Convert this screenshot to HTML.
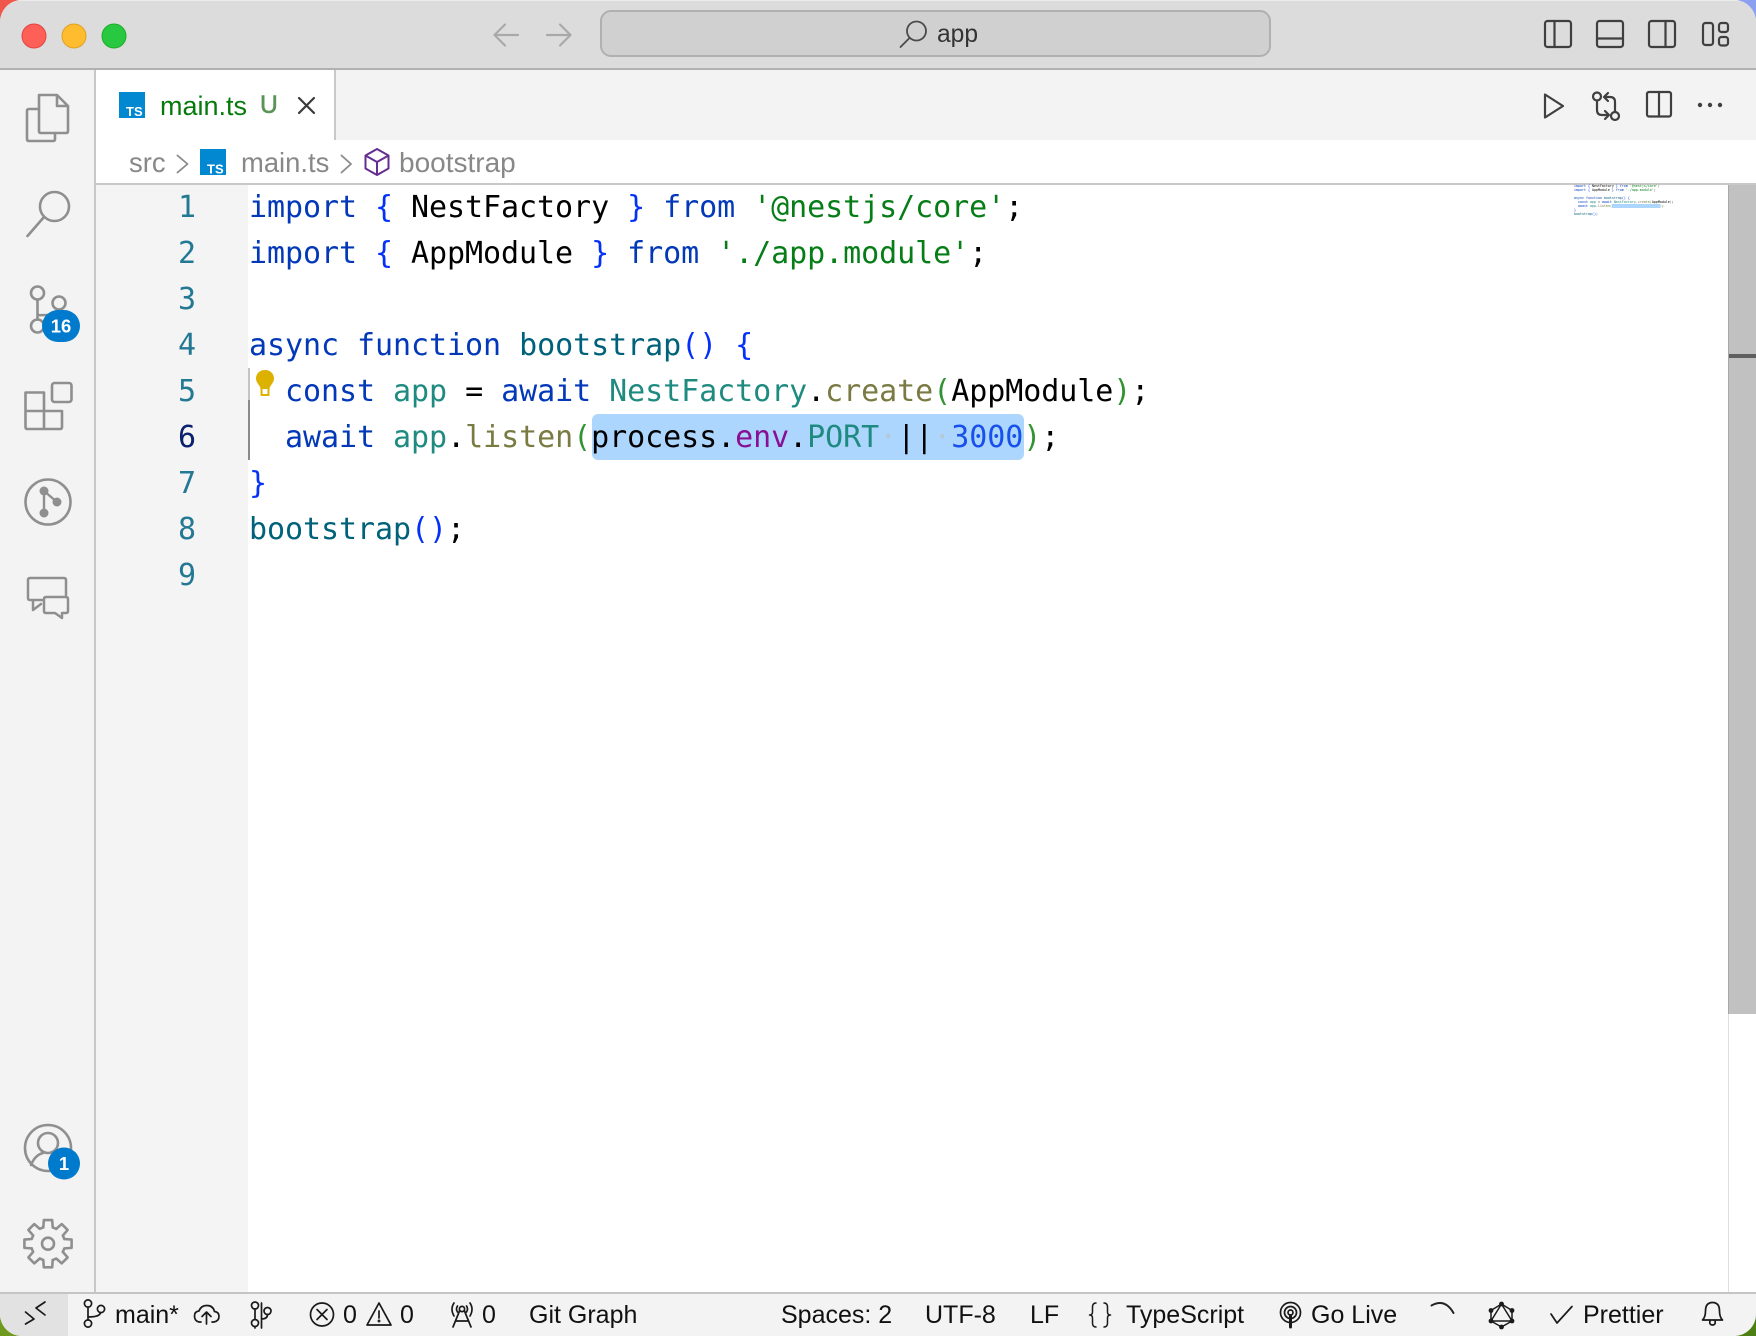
<!DOCTYPE html>
<html><head><meta charset="utf-8">
<style>
html,body{margin:0;padding:0;width:1756px;height:1336px;overflow:hidden;background:#fff}
#wp{position:absolute;left:0;top:0;width:1756px;height:1336px;background:linear-gradient(#fff,#fff)}
.c{position:absolute;width:30px;height:30px}
#w{position:absolute;left:0;top:0;width:1756px;height:1336px;border-radius:22px;overflow:hidden;background:#fff}
.b{position:absolute}
.t{position:absolute;white-space:pre;font-family:"Liberation Sans",sans-serif;line-height:30px;height:30px}
.st{font-size:25px;color:#111;top:1300px}
.bc{font-size:27.4px;color:#888;top:148px}
#code{position:absolute;left:249px;top:185px;font-family:"DejaVu Sans Mono","Liberation Mono",monospace;font-size:30px;line-height:46px;color:#000;white-space:pre;letter-spacing:-.06px}
#nums{position:absolute;left:150px;width:46px;top:185px;text-align:right;font-family:"DejaVu Sans Mono","Liberation Mono",monospace;font-size:30px;line-height:46px;color:#237893}
#mini{position:absolute;left:1574px;top:184px;font-family:"DejaVu Sans Mono",monospace;font-size:3.32px;line-height:4.03px;white-space:pre;color:#000}
.k{color:#0339b8}.br{color:#0431fa}.s{color:#067d17}.f{color:#00627a}.v{color:#1f8b80}.m{color:#7a7a43}.p{color:#319331}.e{color:#871094}.n{color:#1750eb}.d{color:#b4c8da}
svg{position:absolute;left:0;top:0}
</style></head><body>
<div id="wp">
<div class="c" style="left:0;top:0;background:#f0564a"></div>
<div class="c" style="right:0;top:0;background:#8c9ff0"></div>
<div class="c" style="left:0;bottom:0;background:#6f9a1e"></div>
<div class="c" style="right:0;bottom:0;background:#4e7f14"></div>
</div>
<div id="w">
<!-- title bar -->
<div class="b" style="left:0;top:0;width:1756px;height:68px;background:#dcdcdc;border-top:1px solid #ececec;box-sizing:border-box"></div>
<div class="b" style="left:0;top:68px;width:1756px;height:2px;background:#b1b1b1"></div>
<div class="b" style="left:600px;top:10px;width:671px;height:47px;box-sizing:border-box;background:#d0d0d0;border:2px solid #b0b0b0;border-radius:11px"></div>
<div class="t" style="left:937px;top:20px;font-size:24.6px;color:#333">app</div>
<!-- activity bar -->
<div class="b" style="left:0;top:70px;width:94px;height:1222px;background:#f3f3f3"></div>
<div class="b" style="left:94px;top:70px;width:2px;height:1222px;background:#c8c8c8"></div>
<!-- tabs -->
<div class="b" style="left:96px;top:70px;width:1660px;height:70px;background:#f3f3f3"></div>
<div class="b" style="left:96px;top:70px;width:238px;height:70px;background:#fff"></div>
<div class="b" style="left:334px;top:70px;width:2px;height:70px;background:#c8c8c8"></div>
<div class="t" style="left:160px;top:91px;font-size:27px;color:#067a0a">main.ts</div>
<div class="t" style="left:260px;top:91px;font-size:24.6px;color:#5b9457;-webkit-text-stroke:.6px #5b9457">U</div>
<!-- breadcrumbs -->
<div class="t bc" style="left:129px">src</div>
<div class="t bc" style="left:241px">main.ts</div>
<div class="t bc" style="left:399px;font-size:28px">bootstrap</div>
<div class="b" style="left:96px;top:183px;width:1660px;height:2px;background:#c8c8c8"></div>
<!-- gutter -->
<div class="b" style="left:96px;top:185px;width:152px;height:1107px;background:#f4f4f4"></div>
<div id="nums">1<br>2<br>3<br>4<br>5<br><span style="color:#0b216f">6</span><br>7<br>8<br>9</div>
<!-- selection -->
<div class="b" style="left:592px;top:414px;width:432px;height:46px;background:#add6ff;border-radius:6px"></div>
<div class="b" style="left:248px;top:368px;width:2px;height:32px;background:#c4c4c4"></div>
<div class="b" style="left:248px;top:400px;width:2px;height:60px;background:#8a8a8a"></div>
<div id="code"><span class="k">import</span> <span class="br">{</span> NestFactory <span class="br">}</span> <span class="k">from</span> <span class="s">'@nestjs/core'</span>;
<span class="k">import</span> <span class="br">{</span> AppModule <span class="br">}</span> <span class="k">from</span> <span class="s">'./app.module'</span>;

<span class="k">async</span> <span class="k">function</span> <span class="f">bootstrap</span><span class="br">()</span> <span class="br">{</span>
  <span class="k">const</span> <span class="v">app</span> = <span class="k">await</span> <span class="v">NestFactory</span>.<span class="m">create</span><span class="p">(</span>AppModule<span class="p">)</span>;
  <span class="k">await</span> <span class="v">app</span>.<span class="m">listen</span><span class="p">(</span>process.<span class="e">env</span>.<span class="v">PORT</span><span class="d">·</span>||<span class="d">·</span><span class="n">3000</span><span class="p">)</span>;
<span class="br">}</span>
<span class="f">bootstrap</span><span class="br">()</span>;</div>
<!-- minimap -->
<div id="mini"><span class="k">import</span> <span class="br">{</span> NestFactory <span class="br">}</span> <span class="k">from</span> <span class="s">'@nestjs/core'</span>;
<span class="k">import</span> <span class="br">{</span> AppModule <span class="br">}</span> <span class="k">from</span> <span class="s">'./app.module'</span>;

<span class="k">async</span> <span class="k">function</span> <span class="f">bootstrap</span><span class="br">()</span> <span class="br">{</span>
  <span class="k">const</span> <span class="v">app</span> = <span class="k">await</span> <span class="v">NestFactory</span>.<span class="m">create</span><span class="p">(</span>AppModule<span class="p">)</span>;
  <span class="k">await</span> <span class="v">app</span>.<span class="m">listen</span><span class="p">(</span><span style="background:#add6ff;color:#add6ff">process.env.PORT || 3000</span><span class="p">)</span>;
<span class="br">}</span>
<span class="f">bootstrap</span><span class="br">()</span>;</div>
<!-- scrollbar -->
<div class="b" style="left:1728px;top:185px;width:1px;height:1107px;background:#dedede"></div>
<div class="b" style="left:1729px;top:185px;width:27px;height:829px;background:#c1c1c1"></div>
<div class="b" style="left:1728px;top:185px;width:1px;height:829px;background:#a8a8a8"></div>
<div class="b" style="left:1729px;top:354px;width:27px;height:4px;background:#5f5f5f"></div>
<!-- status bar -->
<div class="b" style="left:0;top:1292px;width:1756px;height:2px;background:#c4c4c4"></div>
<div class="b" style="left:0;top:1294px;width:1756px;height:42px;background:#f3f3f3"></div>
<div class="b" style="left:0;top:1294px;width:68px;height:42px;background:#e2e2e2"></div>
<div class="t st" style="left:115px">main*</div>
<div class="t st" style="left:343px">0</div>
<div class="t st" style="left:400px">0</div>
<div class="t st" style="left:482px">0</div>
<div class="t st" style="left:529px">Git Graph</div>
<div class="t st" style="left:781px">Spaces: 2</div>
<div class="t st" style="left:925px">UTF-8</div>
<div class="t st" style="left:1030px">LF</div>
<div class="t st" style="left:1126px">TypeScript</div>
<div class="t st" style="left:1311px">Go Live</div>
<div class="t st" style="left:1583px">Prettier</div>

<svg width="1756" height="1336" viewBox="0 0 1756 1336" fill="none" stroke-linecap="round" stroke-linejoin="round">
<!-- traffic lights -->
<circle cx="34" cy="36" r="12" fill="#fe5f57" stroke="#e2463f" stroke-width="1"/>
<circle cx="74" cy="36" r="12" fill="#febc2e" stroke="#dea123" stroke-width="1"/>
<circle cx="114" cy="36" r="12" fill="#28c840" stroke="#1dad2b" stroke-width="1"/>
<!-- nav arrows -->
<g stroke="#a9a9a9" stroke-width="2.2">
<path d="M494.5 35H518M505 24.5L494.5 35L505 45.5"/>
<path d="M547 35H570.5M560 24.5L570.5 35L560 45.5"/>
</g>
<!-- title search -->
<g stroke="#4a4a4a" stroke-width="1.8">
<circle cx="916.5" cy="31" r="9.5"/><path d="M909.5 38L900.5 47"/>
</g>
<!-- layout icons -->
<g stroke="#3f3f3f" stroke-width="2.2">
<rect x="1545" y="21" width="26" height="26" rx="2.5"/><path d="M1554.5 21V47"/>
<rect x="1597" y="21" width="26" height="26" rx="2.5"/><path d="M1597 38.500H1623"/>
<rect x="1649" y="21" width="26" height="26" rx="2.500"/><path d="M1665.500 21V47"/>
<rect x="1703" y="23" width="10" height="22" rx="2.500"/><rect x="1719" y="23" width="9" height="9" rx="2.500"/><rect x="1719" y="37" width="9" height="8.500" rx="2.500"/>
<!-- tab actions -->
<path d="M1545 94.500L1563 106L1545 117.500Z"/>
<circle cx="1597" cy="96.500" r="4"/><circle cx="1615" cy="116" r="4"/>
<path d="M1597 100.500V110q0 5 5 5h6M1605 111l4 4l-4 4M1615 112V102q0-5-5-5h-6M1608 93l-4 4l4 4"/>
<rect x="1647" y="92" width="24" height="24.500" rx="2"/><path d="M1659 92V116.500"/>
</g>
<g fill="#3f3f3f"><circle cx="1700" cy="105" r="2.200"/><circle cx="1710" cy="105" r="2.200"/><circle cx="1720" cy="105" r="2.200"/></g>
<!-- tab icon -->
<rect x="119" y="92" width="26" height="26" fill="#0288d1"/>
<text x="126" y="116" font-family="Liberation Sans" font-weight="700" font-size="13" fill="#fff">TS</text>
<path d="M299 98L314 113M314 98L299 113" stroke="#3a3a3a" stroke-width="2.200"/>
<!-- breadcrumbs icons -->
<path d="M177.500 155.500L187.500 164L177.500 172.500M341.500 155.500L351 164L341.500 172.500" stroke="#8a8a8a" stroke-width="1.800"/>
<rect x="200" y="149" width="26" height="26" fill="#0288d1"/>
<text x="207" y="173.500" font-family="Liberation Sans" font-weight="700" font-size="13" fill="#fff">TS</text>
<path d="M377 149L388.500 155.500V168.500L377 175L365.500 168.500V155.500ZM365.500 155.500L377 162L388.500 155.500M377 162V175" stroke="#652d90" stroke-width="2"/>
<!-- lightbulb -->
<path d="M265 370c-5.500 0-9 3.800-9 8.500c0 3.800 3 6 4.500 9.500h9c1.500-3.500 4.500-5.700 4.500-9.500c0-4.700-3.500-8.500-9-8.500z" fill="#ddb100"/>
<path d="M261.500 388h7v7h-7z" stroke="#ddb100" stroke-width="2" fill="#fff"/>
<!-- activity icons -->
<g stroke="#8f8f8f" stroke-width="2.600">
<path d="M39 95H57L68 106V131Q68 133 66 133H41Q39 133 39 131ZM57 95V106H68"/>
<path d="M39 109H29Q27 109 27 111V139Q27 141 29 141H53Q55 141 55 139V133"/>
<circle cx="54.500" cy="206.500" r="14.500"/><path d="M44 217L27.500 236"/>
<circle cx="37.500" cy="293" r="6.500"/><circle cx="59" cy="303" r="6.500"/><circle cx="37.500" cy="326" r="6.500"/>
<path d="M37.500 299.500V319.500M37.500 315Q55 316 59 309.500"/>
<rect x="52" y="383" width="19.500" height="19" rx="2.500"/>
<path d="M25.500 392.500H44V429H27.500Q25.500 429 25.500 427ZM25.500 411H62V427Q62 429 60 429H44"/>
<circle cx="48" cy="502" r="22.500"/>
<path d="M44 491V513M44 491L57 502" stroke-width="2.400"/>
<path d="M43 600H30Q28 600 28 598V580Q28 578 30 578H64Q66 578 66 580V595M33 600V610L41 604" stroke-width="2.500"/>
<path d="M46 597H66Q68 597 68 599V611Q68 613 66 613H62V618L55 613H46Q44 613 44 611V599Q44 597 46 597Z" stroke-width="2.500"/>
<circle cx="48" cy="1148" r="23"/><circle cx="48" cy="1143" r="10"/>
<path d="M31 1165Q35 1155 43 1153M65 1165Q61 1155 53 1153"/>
<g transform="translate(48 1243.700)">
<g id="gt"><path d="M-4.690-16.300L-4.170-23.600L4.170-23.600L4.690-16.300L8.240-14.870"/></g>
<use href="#gt" transform="rotate(45)"/><use href="#gt" transform="rotate(90)"/><use href="#gt" transform="rotate(135)"/><use href="#gt" transform="rotate(180)"/><use href="#gt" transform="rotate(225)"/><use href="#gt" transform="rotate(270)"/><use href="#gt" transform="rotate(315)"/>
<circle r="6"/>
</g>
</g>
<g fill="#8f8f8f"><circle cx="44" cy="491" r="4.500"/><circle cx="57" cy="502" r="4.500"/><circle cx="44" cy="513" r="4.500"/></g>
<!-- badges -->
<rect x="42" y="310" width="38" height="32" rx="16" fill="#007acc"/>
<text x="61" y="332.500" text-anchor="middle" font-family="Liberation Sans" font-weight="700" font-size="18.500" fill="#fff">16</text>
<circle cx="64" cy="1163.500" r="16" fill="#007acc"/>
<text x="64" y="1170" text-anchor="middle" font-family="Liberation Sans" font-weight="700" font-size="18.500" fill="#fff">1</text>
<!-- status icons -->
<g stroke="#1a1a1a" stroke-width="1.700">
<path d="M25.500 1312L34 1319L25.500 1324M45 1302L36 1308L45 1315"/>
<circle cx="88" cy="1303.500" r="3.600"/><circle cx="101" cy="1309" r="3.600"/><circle cx="88" cy="1323.500" r="3.600"/>
<path d="M88 1307V1320M88 1317Q100 1317 100.500 1312.500"/>
<path d="M201 1322H199Q194.500 1321 194.500 1316Q194.500 1311.500 199 1311Q201 1305.500 207 1305.500Q213 1305.500 214.500 1311.500Q219 1312 219 1316.500Q219 1321 214 1322H212M206.500 1324V1312.500M202 1316.500L206.500 1312L211 1316.500"/>
<circle cx="255" cy="1305.500" r="3.500"/><circle cx="255" cy="1323" r="3.500"/><circle cx="267.500" cy="1311" r="3.500"/>
<path d="M255 1309V1319.500M261.500 1303V1328M261.500 1319Q267.500 1319 267.500 1314.500M255 1327V1328"/>
<circle cx="322" cy="1314.500" r="11.500"/><path d="M317 1309.500L327 1319.500M327 1309.500L317 1319.500"/>
<path d="M379 1303L391 1325H367ZM379 1311V1318"/>
<circle cx="379" cy="1321" r=".6"/>
<path d="M459.500 1311L453 1327M464.500 1311L471 1327M456 1321H468M454 1303Q450 1309 454 1316M470 1303Q474 1309 470 1316M457.500 1306Q455.500 1309 457.500 1312M466.500 1306Q468.500 1309 466.500 1312"/>
<circle cx="462" cy="1309" r="2.600"/>
<path d="M1096 1303Q1092.500 1303 1092.500 1307V1312Q1092.500 1315 1089.500 1315Q1092.500 1315 1092.500 1318V1323Q1092.500 1327 1096 1327M1104 1303Q1107.500 1303 1107.500 1307V1312Q1107.500 1315 1110.500 1315Q1107.500 1315 1107.500 1318V1323Q1107.500 1327 1104 1327" stroke-width="1.500"/>
<circle cx="1290.500" cy="1312.500" r="10"/><circle cx="1290.500" cy="1312.500" r="6"/><circle cx="1290.500" cy="1312.500" r="2.500"/>
<path d="M1290.500 1316V1327" stroke-width="3"/>
<path d="M1431.500 1305.500Q1445 1298 1453.500 1313" stroke="#222" stroke-width="2"/>
<path d="M1501.500 1304L1512 1310.500V1321L1501.500 1327L1491 1321V1310.500ZM1501.500 1304L1491 1321H1512Z" stroke-width="1.500"/>
<path d="M1551 1314L1557 1323L1572 1306.500"/>
<path d="M1702.500 1320Q1705.500 1317 1705.500 1311Q1705.500 1302.500 1712.500 1302.500Q1719.500 1302.500 1719.500 1311Q1719.500 1317 1722.500 1320ZM1710 1320.500Q1709 1325 1712.500 1325Q1716 1325 1715 1320.500"/>
</g>
<g fill="#1a1a1a"><circle cx="1501.500" cy="1304" r="2.400"/><circle cx="1491" cy="1310.500" r="2.400"/><circle cx="1512" cy="1310.500" r="2.400"/><circle cx="1491" cy="1321" r="2.400"/><circle cx="1512" cy="1321" r="2.400"/><circle cx="1501.500" cy="1327" r="2.400"/></g>
</svg>
</div>
</body></html>
